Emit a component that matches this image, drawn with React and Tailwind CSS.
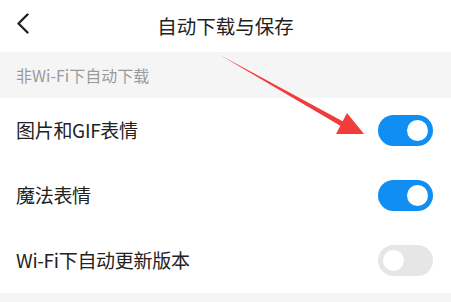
import React, { useState } from 'react';

const Toggle = ({ on, onChange }) => (
  <button
    onClick={onChange}
    className={`flex h-[31px] w-[55px] items-center rounded-full px-[5px] ${
      on ? 'justify-end bg-[#0f8ef3]' : 'justify-start bg-[#e6e6e6]'
    }`}
  >
    <span className="block h-[21px] w-[21px] rounded-full bg-white" />
  </button>
);

const Row = ({ label, on, onChange }) => (
  <div className="flex h-[65px] items-center justify-between pl-4 pr-[18px]">
    <span className="text-[19px] tracking-[-0.3px] text-[#222]">{label}</span>
    <Toggle on={on} onChange={onChange} />
  </div>
);

export default function App() {
  const [settings, setSettings] = useState({ gif: true, magic: true, update: false });

  const flip = (key) => setSettings((prev) => ({ ...prev, [key]: !prev[key] }));

  return (
    <div
      className="relative h-[302px] w-[451px] overflow-hidden bg-white"
      style={{ fontFamily: '"Noto Sans CJK SC", "Noto Sans", sans-serif' }}
    >
      {/* header */}
      <div className="relative flex h-[52px] items-center justify-center">
        <svg className="absolute left-[16px] top-[13px]" width="14" height="21" viewBox="0 0 14 21">
          <path d="M11.5 1.5 L2.5 10.5 L11.5 19.5" fill="none" stroke="#222" strokeWidth="2.4" strokeLinecap="round" strokeLinejoin="round" />
        </svg>
        <h1 className="text-[19.5px] text-[#222]">自动下载与保存</h1>
      </div>

      {/* section title */}
      <div className="flex h-[46px] items-center bg-[#f5f5f5] pl-4">
        <span className="text-[16px] text-[#9a9a9a]">非Wi-Fi下自动下载</span>
      </div>

      <Row label="图片和GIF表情" on={settings.gif} onChange={() => flip('gif')} />
      <Row label="魔法表情" on={settings.magic} onChange={() => flip('magic')} />
      <Row label="Wi-Fi下自动更新版本" on={settings.update} onChange={() => flip('update')} />

      <div className="h-[20px] bg-[#f5f5f5]" />

      {/* red annotation arrow */}
      <svg className="pointer-events-none absolute left-0 top-0" width="451" height="302">
        <polygon
          points="220,55 342.7,121.3 347,113 364,134 336,134 340.3,125.7"
          fill="#f23b3b"
        />
      </svg>
    </div>
  );
}
